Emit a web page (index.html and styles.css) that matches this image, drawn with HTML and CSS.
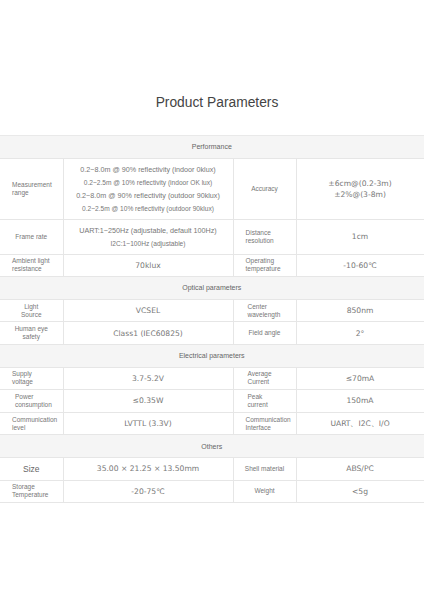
FILE: index.html
```html
<!DOCTYPE html>
<html>
<head>
<meta charset="utf-8">
<link rel="stylesheet" href="styles.css">
</head>
<body>
<h1 class="title">Product Parameters</h1>
<table class="params">
<colgroup><col class="c1"><col class="c2"><col class="c3"><col class="c4"></colgroup>
<tr class="sec"><td colspan="4">Performance</td></tr>
<tr class="r-meas">
  <td class="lbl lbl-left">Measurement<br>range</td>
  <td class="val small"><div class="l1">0.2~8.0m @ 90% reflectivity (indoor 0klux)</div><div class="l2">0.2~2.5m @ 10% reflectivity (indoor OK lux)</div><div class="l1">0.2~8.0m @ 90% reflectivity (outdoor 90klux)</div><div class="l2">0.2~2.5m @ 10% reflectivity (outdoor 90klux)</div></td>
  <td class="lbl">Accuracy</td>
  <td class="val">±6cm@(0.2-3m)<br>±2%@(3-8m)</td>
</tr>
<tr class="r-frame">
  <td class="lbl">Frame rate</td>
  <td class="val small"><div class="l1">UART:1~250Hz (adjustable, default 100Hz)</div><div class="l2">I2C:1~100Hz (adjustable)</div></td>
  <td class="lbl lbl-left">Distance<br>resolution</td>
  <td class="val">1cm</td>
</tr>
<tr>
  <td class="lbl lbl-left">Ambient light<br>resistance</td>
  <td class="val">70klux</td>
  <td class="lbl lbl-left">Operating<br>temperature</td>
  <td class="val">-10-60℃</td>
</tr>
<tr class="sec"><td colspan="4">Optical parameters</td></tr>
<tr>
  <td class="lbl">Light<br>Source</td>
  <td class="val">VCSEL</td>
  <td class="lbl lbl-left ind">Center<br>wavelength</td>
  <td class="val">850nm</td>
</tr>
<tr>
  <td class="lbl">Human eye<br>safety</td>
  <td class="val">Class1 (IEC60825)</td>
  <td class="lbl">Field angle</td>
  <td class="val">2°</td>
</tr>
<tr class="sec"><td colspan="4">Electrical parameters</td></tr>
<tr>
  <td class="lbl lbl-left">Supply<br>voltage</td>
  <td class="val">3.7-5.2V</td>
  <td class="lbl lbl-left ind">Average<br>Current</td>
  <td class="val">≤70mA</td>
</tr>
<tr>
  <td class="lbl lbl-left ind2">Power<br>consumption</td>
  <td class="val">≤0.35W</td>
  <td class="lbl lbl-left ind">Peak<br>current</td>
  <td class="val">150mA</td>
</tr>
<tr>
  <td class="lbl lbl-left">Communication<br>level</td>
  <td class="val">LVTTL (3.3V)</td>
  <td class="lbl lbl-left">Communication<br>Interface</td>
  <td class="val">UART、I2C、I/O</td>
</tr>
<tr class="sec"><td colspan="4">Others</td></tr>
<tr>
  <td class="lbl big">Size</td>
  <td class="val">35.00 × 21.25 × 13.50mm</td>
  <td class="lbl">Shell material</td>
  <td class="val">ABS/PC</td>
</tr>
<tr>
  <td class="lbl lbl-left">Storage<br>Temperature</td>
  <td class="val">-20-75℃</td>
  <td class="lbl">Weight</td>
  <td class="val">&lt;5g</td>
</tr>
</table>
</body>
</html>
```
FILE: styles.css
```css
html, body {
  margin: 0;
  padding: 0;
  background: #ffffff;
}
body {
  width: 424px;
  font-family: "Liberation Sans", Arial, sans-serif;
}
.title {
  margin: 0;
  padding: 95px 0 24px 10px;
  font-size: 13.8px;
  line-height: 16px;
  font-weight: normal;
  color: #444444;
  text-align: center;
}
.params {
  width: 424px;
  border-collapse: collapse;
  table-layout: fixed;
}
.c1 { width: 63px; }
.c2 { width: 170px; }
.c3 { width: 63px; }
.c4 { width: 128px; }
.params td {
  border: 1px solid #e6e6e6;
  padding: 0;
  height: 21.6px;
  text-align: center;
  vertical-align: middle;
  color: #777777;
}
.params tr:first-child td { border-top-color: #e9e9e9; }
.params td:first-child { border-left: 0; }
.sec td {
  background: #f5f5f5;
  font-size: 7px;
  line-height: 9px;
  color: #666666;
}
.lbl {
  font-size: 6.5px;
  line-height: 8px;
  color: #7a7a7a;
}
.lbl-left {
  text-align: left !important;
  padding-left: 12px !important;
}
.lbl-left.ind { padding-left: 14px !important; }
.lbl-left.ind2 { padding-left: 15px !important; }
.lbl.big {
  font-size: 8.5px;
  color: #666666;
}
.val {
  font-family: "DejaVu Sans", sans-serif;
  font-size: 7.6px;
  line-height: 11px;
  color: #707070;
}
.small {
  font-family: "Liberation Sans", Arial, sans-serif;
  color: #a0a0a0;
}
.small .l1 { font-size: 7.2px; line-height: 13px; }
.small .l2 { font-size: 6.6px; line-height: 13px; }
.r-meas td { height: 60px; }
.r-frame td { height: 34px; }
```
